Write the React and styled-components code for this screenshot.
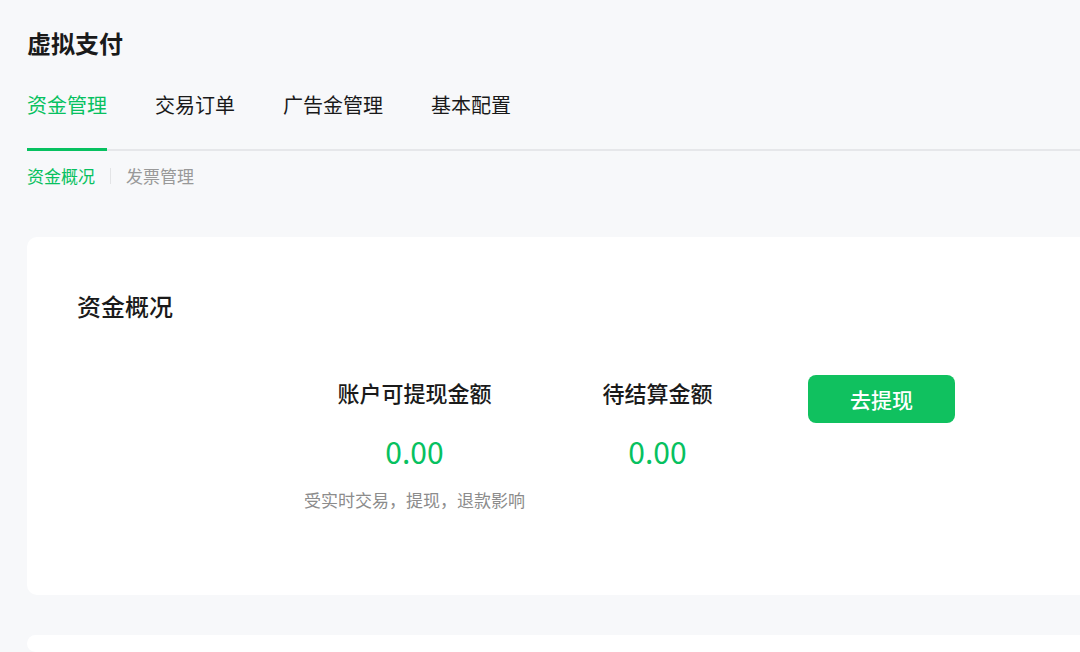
import styled, { createGlobalStyle } from "styled-components";

const GlobalStyle = createGlobalStyle`
  html, body {
    margin: 0;
    padding: 0;
    background: #f7f8fa;
    overflow: hidden;
  }
  body {
    font-family: "Noto Sans CJK SC", "Noto Sans", "Liberation Sans", sans-serif;
    color: #1a1a1a;
  }
`;

const GREEN = "#07c160";

const Page = styled.div`
  width: 1120px;
  padding: 27px 0 0 27px;
  box-sizing: border-box;
`;

const Title = styled.h1`
  margin: 0;
  font-size: 24px;
  line-height: 32px;
  font-weight: 700;
  color: #1a1a1a;
`;

const TabBar = styled.div`
  display: flex;
  gap: 48px;
  margin-top: 32px;
  border-bottom: 2px solid #e6e7ea;
`;

const Tab = styled.div`
  position: relative;
  font-size: 20px;
  line-height: 28px;
  padding-bottom: 30px;
  color: ${(p) => (p.$active ? GREEN : "#1a1a1a")};
  cursor: pointer;

  &::after {
    content: "";
    display: ${(p) => (p.$active ? "block" : "none")};
    position: absolute;
    left: 0;
    right: 0;
    bottom: -2px;
    height: 3px;
    background: ${GREEN};
  }
`;

const SubNav = styled.div`
  display: flex;
  align-items: center;
  margin-top: 13px;
`;

const SubTab = styled.span`
  font-size: 17px;
  line-height: 24px;
  color: ${(p) => (p.$active ? GREEN : "#999999")};
  cursor: pointer;
`;

const SubDivider = styled.span`
  width: 1px;
  height: 16px;
  margin: 0 15px;
  background: #e3e4e6;
`;

const Card = styled.section`
  background: #fff;
  border-radius: 10px;
  margin-top: 49px;
  padding: 53px 50px 84px;
`;

const CardTitle = styled.h2`
  margin: 0;
  font-size: 24px;
  line-height: 32px;
  font-weight: 500;
  color: #1a1a1a;
`;

const StatsRow = styled.div`
  display: flex;
  align-items: flex-start;
  margin-top: 53px;
  padding-left: 216px;
`;

const Stat = styled.div`
  width: 243px;
  display: flex;
  flex-direction: column;
  align-items: center;
  padding-top: 2px;
`;

const StatLabel = styled.div`
  font-size: 22px;
  line-height: 30px;
  font-weight: 500;
  color: #1a1a1a;
`;

const StatValue = styled.div`
  margin-top: 26px;
  font-size: 30px;
  line-height: 36px;
  color: ${GREEN};
`;

const StatNote = styled.div`
  margin-top: 20px;
  font-size: 17px;
  line-height: 22px;
  color: #8c8c8c;
  white-space: nowrap;
`;

const WithdrawButton = styled.button`
  margin-left: 29px;
  width: 147px;
  height: 48px;
  border: none;
  border-radius: 8px;
  background: #10c15f;
  color: #fff;
  font-family: inherit;
  font-size: 21px;
  font-weight: 500;
  cursor: pointer;
`;

const NextCard = styled.section`
  background: #fff;
  border-radius: 10px;
  margin-top: 40px;
  height: 17px;
`;

const tabs = ["资金管理", "交易订单", "广告金管理", "基本配置"];

export default function App() {
  return (
    <>
      <GlobalStyle />
      <Page>
        <Title>虚拟支付</Title>
        <TabBar>
          {tabs.map((t, i) => (
            <Tab key={t} $active={i === 0}>
              {t}
            </Tab>
          ))}
        </TabBar>
        <SubNav>
          <SubTab $active>资金概况</SubTab>
          <SubDivider />
          <SubTab>发票管理</SubTab>
        </SubNav>

        <Card>
          <CardTitle>资金概况</CardTitle>
          <StatsRow>
            <Stat>
              <StatLabel>账户可提现金额</StatLabel>
              <StatValue>0.00</StatValue>
              <StatNote>受实时交易，提现，退款影响</StatNote>
            </Stat>
            <Stat>
              <StatLabel>待结算金额</StatLabel>
              <StatValue>0.00</StatValue>
            </Stat>
            <WithdrawButton>去提现</WithdrawButton>
          </StatsRow>
        </Card>
        <NextCard />
      </Page>
    </>
  );
}
